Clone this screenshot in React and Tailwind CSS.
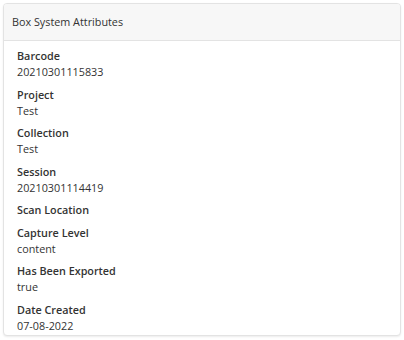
const ATTRIBUTES = [
  { label: "Barcode", value: "20210301115833" },
  { label: "Project", value: "Test" },
  { label: "Collection", value: "Test" },
  { label: "Session", value: "20210301114419" },
  { label: "Scan Location", value: "" },
  { label: "Capture Level", value: "content" },
  { label: "Has Been Exported", value: "true" },
  { label: "Date Created", value: "07-08-2022" },
];

export default function App() {
  return (
    <div className="w-[404px] h-[340px] bg-white p-[3px] font-['Open_Sans',sans-serif] text-[#333]">
      <div className="w-[398px] rounded-[4px] border border-[#e3e3e3] bg-white shadow-[0_1px_2px_rgba(0,0,0,0.08)] overflow-hidden">
        <div className="h-[37px] flex items-center px-[8px] bg-[#f7f7f7] border-b border-[#e3e3e3] text-[10.8px]">
          Box System Attributes
        </div>
        <div className="px-[13px] pt-[7px] pb-[1px]">
          {ATTRIBUTES.map((attr) => (
            <div key={attr.label} className="mb-[6.5px] last:mb-0 text-[10.8px] leading-[16px]">
              <div className="font-semibold">{attr.label}</div>
              {attr.value && <div>{attr.value}</div>}
            </div>
          ))}
        </div>
      </div>
    </div>
  );
}
